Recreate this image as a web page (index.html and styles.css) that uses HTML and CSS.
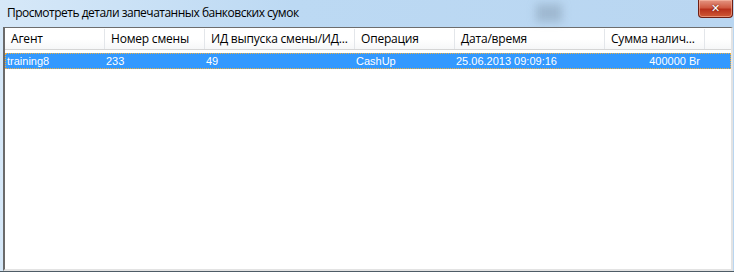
FILE: index.html
```html
<!DOCTYPE html>
<html lang="ru">
<head>
    <meta charset="UTF-8">
    <title>Просмотреть детали запечатанных банковских сумок</title>
    <link rel="stylesheet" href="styles.css">
</head>
<body>
    <div class="window">
        <div class="titlebar">
            <span class="title">Просмотреть детали запечатанных банковских сумок</span>
            <span class="blur"></span>
            <div class="close">&#x2715;</div>
        </div>

        <div class="list">
            <div class="header">
                <div class="col w100">Агент</div>
                <div class="col w100">Номер смены</div>
                <div class="col w150">ИД выпуска смены/ИД...</div>
                <div class="col w100">Операция</div>
                <div class="col w150">Дата/время</div>
                <div class="col w100">Сумма налич...</div>
                <div class="col filler"></div>
            </div>
            <div class="row selected">
                <div class="cell w100">training8</div>
                <div class="cell w100">233</div>
                <div class="cell w150">49</div>
                <div class="cell w100">CashUp</div>
                <div class="cell w150">25.06.2013 09:09:16</div>
                <div class="cell w100 num">400000 Br</div>
            </div>
        </div>
        <div class="bottom"></div>
    </div>
</body>
</html>
```

FILE: styles.css
```css
body {
    margin: 0;
    background-color: #ffffff;
}

.window {
    width: 734px;
    height: 272px;
    background: linear-gradient(to right, #d6e8f8 0%, #bcd9f3 40%, #b9d6f1 100%);
    overflow: hidden;
}

.titlebar {
    height: 27px;
    display: flex;
    align-items: flex-start;
    position: relative;
}

.title {
    font-family: "Open Sans", "Noto Sans", sans-serif;
    font-size: 12px;
    color: #000000;
    padding: 4px 0 0 7px;
    letter-spacing: -0.5px;
}

.blur {
    position: absolute;
    left: 536px;
    top: 4px;
    width: 26px;
    height: 18px;
    background: rgba(110, 130, 150, 0.35);
    filter: blur(4px);
}

.close {
    margin-left: auto;
    margin-right: 1px;
    width: 35px;
    height: 18px;
    box-sizing: border-box;
    border: 1px solid #6e1f14;
    border-top: none;
    border-radius: 0 0 4px 4px;
    background: linear-gradient(to bottom, #e49582 0%, #d05a42 45%, #b8311c 55%, #cf5a36 100%);
    box-shadow: inset 0 0 0 1px rgba(255, 200, 180, 0.5);
    color: #ffffff;
    font-family: "DejaVu Sans", sans-serif;
    font-size: 11px;
    font-weight: bold;
    line-height: 17px;
    text-align: center;
    text-shadow: 0 0 2px #4a1208;
}

.list {
    margin-left: 3px;
    width: 726px;
    height: 241px;
    background-color: #ffffff;
    border-top: 1px solid #6d6d6d;
    border-left: 2px solid #6a6a6a;
    border-right: 2px solid #e3e3e3;
    border-bottom: 2px solid #e3e3e3;
    font-family: "Liberation Sans", sans-serif;
}

.header {
    display: flex;
    height: 20px;
    border-top: 1px solid #ffffff;
    background: linear-gradient(to bottom, #ffffff 0%, #ffffff 50%, #f6f7f8 100%);
    border-bottom: 1px solid #d5d5d5;
}

.col {
    font-family: "Open Sans", "Noto Sans", sans-serif;
    font-size: 12px;
    color: #000000;
    line-height: 19px;
    padding-left: 6px;
    box-sizing: border-box;
    border-right: 1px solid #e3e6ea;
    white-space: nowrap;
    overflow: hidden;
    letter-spacing: -0.2px;
}

.filler {
    flex: 1;
    border-right: none;
}

.w100 {
    width: 100px;
    flex: none;
}

.w150 {
    width: 150px;
    flex: none;
}

.row {
    display: flex;
    height: 16px;
    margin-top: 3px;
    box-sizing: border-box;
}

.selected {
    background-color: #3399ff;
    border: 1px dotted #3b2a10;
    outline: 1px dotted #f0b040;
    outline-offset: -1px;
}

.cell {
    font-size: 11px;
    color: #ffffff;
    line-height: 14px;
    padding-left: 1px;
    box-sizing: border-box;
    white-space: nowrap;
}

.cell:first-child {
    width: 99px;
}

.num {
    text-align: right;
    padding-right: 5px;
}

.bottom {
    height: 3px;
    background-color: #4e5c66;
}
```
